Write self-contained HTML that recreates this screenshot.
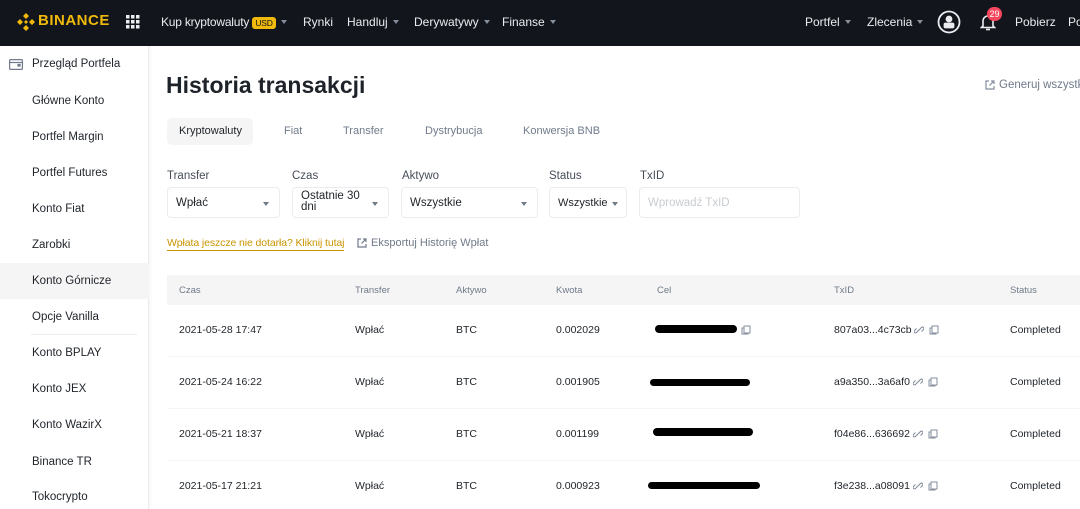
<!DOCTYPE html>
<html><head><meta charset="utf-8"><style>
*{margin:0;padding:0;box-sizing:border-box}
body{width:1080px;height:509px;overflow:hidden;background:#fff;font-family:"Liberation Sans",sans-serif;position:relative;color:#1e2329}
.a{position:absolute;white-space:nowrap}
.top{position:absolute;left:0;top:0;width:1080px;height:46px;background:#12161c}
.nav{position:absolute;color:#eaecef;font-size:12px;top:15px}
.car{display:inline-block;width:0;height:0;border-left:3px solid transparent;border-right:3px solid transparent;border-top:4px solid #848e9c;margin-left:5px;vertical-align:2px}
.side{position:absolute;left:0;top:46px;width:149px;height:463px;border-right:1px solid #eaecef;box-shadow:1px 0 4px rgba(0,0,0,.05)}
.si{position:absolute;left:32px;font-size:11.5px;color:#1e2329}
.tab{position:absolute;top:125px;font-size:11px;color:#707a8a}
.lbl{position:absolute;top:170px;font-size:11.5px;color:#474d57}
.sel{position:absolute;top:187px;height:31px;border:1px solid #eaecef;border-radius:4px;font-size:11.5px;color:#1e2329;padding:9px 0 0 8px}
.sel .car{position:absolute;right:10px;top:14px;margin:0;border-top-color:#707a8a}
.th{position:absolute;top:285px;font-size:9.5px;color:#707a8a}
.td{position:absolute;font-size:10.5px;color:#1e2329}
.line{position:absolute;left:167px;width:913px;height:1px;background:#f5f5f5}
.red{position:absolute;height:8px;background:#000;border-radius:4px}
</style></head><body>
<div class="top"></div>
<svg class="a" style="left:16px;top:12px" width="20" height="20" viewBox="0 0 20 20" fill="#f0b90b"><path d="M10 1l3 3-3 3-3-3zM4 7l3 3-3 3-3-3zM16 7l3 3-3 3-3-3zM10 13l3 3-3 3-3-3zM10 8l2 2-2 2-2-2z"/></svg>
<div class="a" style="left:38px;top:12px;color:#f0b90b;font-weight:bold;font-size:15px;letter-spacing:.5px">BINANCE</div>
<svg class="a" style="left:126px;top:15px" width="14" height="14" viewBox="0 0 14 14" fill="#eaecef"><rect x="0" y="0" width="3.5" height="3.5"/><rect x="5" y="0" width="3.5" height="3.5"/><rect x="10" y="0" width="3.5" height="3.5"/><rect x="0" y="5" width="3.5" height="3.5"/><rect x="5" y="5" width="3.5" height="3.5"/><rect x="10" y="5" width="3.5" height="3.5"/><rect x="0" y="10" width="3.5" height="3.5"/><rect x="5" y="10" width="3.5" height="3.5"/><rect x="10" y="10" width="3.5" height="3.5"/></svg>
<div class="nav" style="left:161px;letter-spacing:-.2px">Kup kryptowaluty <span style="background:#f0b90b;color:#12161c;font-size:8.5px;padding:1px 3px;border-radius:3px">USD</span><span class="car"></span></div>
<div class="nav" style="left:303px">Rynki</div>
<div class="nav" style="left:347px">Handluj<span class="car"></span></div>
<div class="nav" style="left:414px">Derywatywy<span class="car"></span></div>
<div class="nav" style="left:502px">Finanse<span class="car"></span></div>
<div class="nav" style="left:805px">Portfel<span class="car"></span></div>
<div class="nav" style="left:867px">Zlecenia<span class="car"></span></div>
<svg class="a" style="left:937px;top:10px" width="24" height="24" viewBox="0 0 24 24" fill="none" stroke="#eaecef" stroke-width="1.8"><circle cx="12" cy="12" r="10.5"/><circle cx="12" cy="9" r="2.5" fill="#eaecef"/><rect x="7.5" y="13.5" width="9" height="4" rx="1" fill="#eaecef"/></svg>
<svg class="a" style="left:980px;top:13px" width="16" height="18" viewBox="0 0 16 18" fill="none" stroke="#eaecef" stroke-width="1.6"><path d="M3 13V8a5 5 0 0110 0v5l1.5 1.5h-13z"/><path d="M6 16.5h4"/></svg>
<div class="a" style="left:987px;top:7px;width:15px;height:14px;background:#f6465d;border-radius:7px;color:#fff;font-size:9px;text-align:center;line-height:14px">29</div>
<div class="nav" style="left:1015px">Pobierz</div>
<div class="nav" style="left:1068px">Po</div>

<div class="side"></div>
<svg class="a" style="left:9px;top:59px" width="14" height="11" viewBox="0 0 14 11" fill="none" stroke="#707a8a" stroke-width="1.2"><rect x=".6" y=".6" width="12.8" height="9.8" rx="1"/><path d="M.6 3.5h12.8"/><rect x="9" y="5.5" width="2" height="1.5" fill="#707a8a"/></svg>
<div class="si" style="left:32px;top:58px">Przegląd Portfela</div>
<div class="si" style="top:95px">Główne Konto</div>
<div class="si" style="top:131px">Portfel Margin</div>
<div class="si" style="top:167px">Portfel Futures</div>
<div class="si" style="top:203px">Konto Fiat</div>
<div class="si" style="top:239px">Zarobki</div>
<div class="a" style="left:0;top:263px;width:149px;height:36px;background:#f5f5f5"></div>
<div class="si" style="top:275px">Konto Górnicze</div>
<div class="si" style="top:311px">Opcje Vanilla</div>
<div class="a" style="left:31px;top:334px;width:106px;height:1px;background:#eaecef"></div>
<div class="si" style="top:347px">Konto BPLAY</div>
<div class="si" style="top:383px">Konto JEX</div>
<div class="si" style="top:419px">Konto WazirX</div>
<div class="si" style="top:456px">Binance TR</div>
<div class="si" style="top:491px">Tokocrypto</div>

<div class="a" style="left:166px;top:72px;font-size:23px;font-weight:bold;color:#1e2329">Historia transakcji</div>
<svg class="a" style="left:985px;top:80px" width="10" height="10" viewBox="0 0 10 10" fill="none" stroke="#848e9c" stroke-width="1.2"><path d="M4 1H1v8h8V6M6 1h3v3M9 1L4.5 5.5"/></svg>
<div class="a" style="left:999px;top:79px;font-size:11.5px;color:#707a8a">Generuj wszystki</div>

<div class="a" style="left:167px;top:118px;width:86px;height:27px;background:#f5f5f5;border-radius:5px"></div>
<div class="tab" style="left:179px;color:#1e2329">Kryptowaluty</div>
<div class="tab" style="left:284px">Fiat</div>
<div class="tab" style="left:343px">Transfer</div>
<div class="tab" style="left:425px">Dystrybucja</div>
<div class="tab" style="left:523px">Konwersja BNB</div>

<div class="lbl" style="left:167px">Transfer</div>
<div class="lbl" style="left:292px">Czas</div>
<div class="lbl" style="left:402px">Aktywo</div>
<div class="lbl" style="left:549px">Status</div>
<div class="lbl" style="left:640px">TxID</div>
<div class="sel" style="left:167px;width:113px">Wpłać<span class="car"></span></div>
<div class="sel" style="left:292px;width:97px;padding-top:3px;line-height:11px">Ostatnie 30<br>dni<span class="car"></span></div>
<div class="sel" style="left:401px;width:137px">Wszystkie<span class="car"></span></div>
<div class="sel" style="left:549px;width:78px;font-size:11px">Wszystkie<span class="car" style="right:8px"></span></div>
<div class="sel" style="left:639px;width:161px;color:#c8ccd2">Wprowadź TxID</div>

<div class="a" style="left:167px;top:237px;font-size:10.5px;color:#c99400;border-bottom:1px solid #c99400;line-height:13px;letter-spacing:-.1px">Wpłata jeszcze nie dotarła? Kliknij tutaj</div>
<svg class="a" style="left:357px;top:238px" width="10" height="10" viewBox="0 0 10 10" fill="none" stroke="#707a8a" stroke-width="1.2"><path d="M4 1H1v8h8V6M6 1h3v3M9 1L4.5 5.5"/></svg>
<div class="a" style="left:371px;top:237px;font-size:11px;color:#707a8a">Eksportuj Historię Wpłat</div>

<div class="a" style="left:167px;top:275px;width:913px;height:30px;background:#f5f5f5"></div>
<div class="th" style="left:179px">Czas</div>
<div class="th" style="left:355px">Transfer</div>
<div class="th" style="left:456px">Aktywo</div>
<div class="th" style="left:556px">Kwota</div>
<div class="th" style="left:657px">Cel</div>
<div class="th" style="left:834px">TxID</div>
<div class="th" style="left:1010px">Status</div>

<div class="line" style="top:356px"></div>
<div class="line" style="top:408px"></div>
<div class="line" style="top:460px"></div>

<div class="td" style="left:179px;top:324px">2021-05-28 17:47</div>
<div class="td" style="left:355px;top:324px">Wpłać</div>
<div class="td" style="left:456px;top:324px">BTC</div>
<div class="td" style="left:556px;top:324px">0.002029</div>
<div class="red" style="left:655px;top:325px;width:82px"></div>
<div class="td" style="left:834px;top:324px">807a03...4c73cb</div>
<div class="td" style="left:1010px;top:324px">Completed</div>

<div class="td" style="left:179px;top:376px">2021-05-24 16:22</div>
<div class="td" style="left:355px;top:376px">Wpłać</div>
<div class="td" style="left:456px;top:376px">BTC</div>
<div class="td" style="left:556px;top:376px">0.001905</div>
<div class="red" style="left:650px;top:379px;width:100px;height:7px"></div>
<div class="td" style="left:834px;top:376px">a9a350...3a6af0</div>
<div class="td" style="left:1010px;top:376px">Completed</div>

<div class="td" style="left:179px;top:428px">2021-05-21 18:37</div>
<div class="td" style="left:355px;top:428px">Wpłać</div>
<div class="td" style="left:456px;top:428px">BTC</div>
<div class="td" style="left:556px;top:428px">0.001199</div>
<div class="red" style="left:653px;top:428px;width:100px"></div>
<div class="td" style="left:834px;top:428px">f04e86...636692</div>
<div class="td" style="left:1010px;top:428px">Completed</div>

<div class="td" style="left:179px;top:480px">2021-05-17 21:21</div>
<div class="td" style="left:355px;top:480px">Wpłać</div>
<div class="td" style="left:456px;top:480px">BTC</div>
<div class="td" style="left:556px;top:480px">0.000923</div>
<div class="red" style="left:648px;top:482px;width:112px;height:7px"></div>
<div class="td" style="left:834px;top:480px">f3e238...a08091</div>
<div class="td" style="left:1010px;top:480px">Completed</div>

<svg width="0" height="0" style="position:absolute"><defs>
<symbol id="cp" viewBox="0 0 10 10"><g fill="none" stroke="#848e9c" stroke-width="1"><rect x="3" y="1" width="6" height="7"/><path d="M3 3H1v6h6V8"/></g></symbol>
<symbol id="lk" viewBox="0 0 10 10"><g fill="none" stroke="#848e9c" stroke-width="1.1"><path d="M4.5 5.5l-2 2a1.4 1.4 0 01-2-2l2-2M5.5 4.5l2-2a1.4 1.4 0 012 2l-2 2M3.5 6.5l3-3"/></g></symbol>
</defs></svg>
<svg class="a" style="left:741px;top:325px" width="10" height="10"><use href="#cp"/></svg>
<svg class="a" style="left:914px;top:325px" width="10" height="10"><use href="#lk"/></svg>
<svg class="a" style="left:929px;top:325px" width="10" height="10"><use href="#cp"/></svg>
<svg class="a" style="left:913px;top:377px" width="10" height="10"><use href="#lk"/></svg>
<svg class="a" style="left:928px;top:377px" width="10" height="10"><use href="#cp"/></svg>
<svg class="a" style="left:913px;top:429px" width="10" height="10"><use href="#lk"/></svg>
<svg class="a" style="left:928px;top:429px" width="10" height="10"><use href="#cp"/></svg>
<svg class="a" style="left:913px;top:481px" width="10" height="10"><use href="#lk"/></svg>
<svg class="a" style="left:928px;top:481px" width="10" height="10"><use href="#cp"/></svg>
</body></html>
